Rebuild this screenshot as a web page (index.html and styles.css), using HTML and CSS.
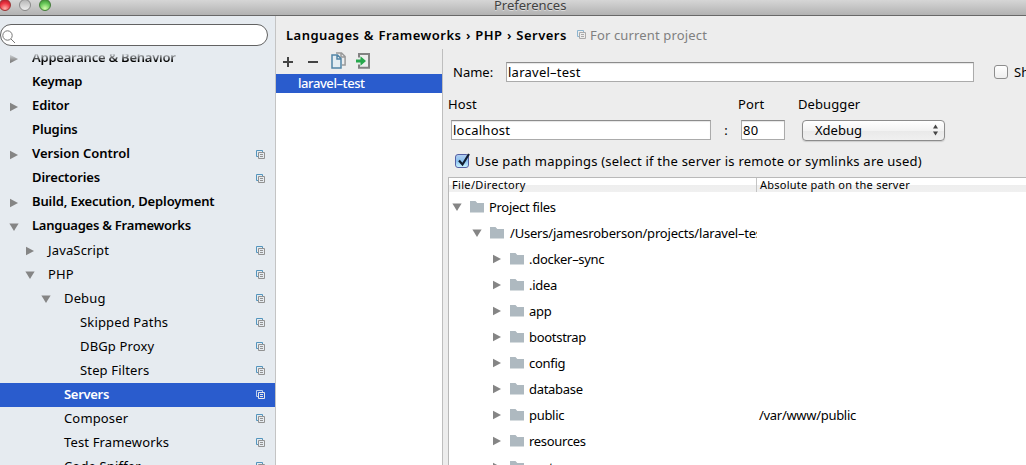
FILE: index.html
```html
<!DOCTYPE html>
<html lang="en">
<head>
<meta charset="utf-8">
<title>Preferences</title>
<link rel="stylesheet" href="styles.css">
</head>
<body>
<svg class="defs" width="0" height="0">
  <symbol id="copy" viewBox="0 0 10 10"><path class="back" d="M2 6.500H.5V.5h6V2"/><path class="front" d="M2.500 2.500h6v6h-6zM4 4.500h3M4 6.500h3"/></symbol>
  <symbol id="right" viewBox="0 0 10 10"><path d="M1 .8v8.400L9 5z"/></symbol>
  <symbol id="down" viewBox="0 0 10 10"><path d="M.4 1.500h9.200L5 9z"/></symbol>
  <symbol id="folder" viewBox="0 0 14 12"><path d="M0 0h5.500l1.800 2H14v9.500H0z"/></symbol>
</svg>
<div class="window">
  <header class="titlebar">
    <div class="lights"><i class="light red"></i><i class="light gray"></i><i class="light green"></i></div>
    <span class="title">Preferences</span>
  </header>
  <div class="content">
    <aside class="sidebar">
      <div class="search"><svg width="14" height="14" viewBox="0 0 14 14"><circle cx="5.500" cy="5.500" r="4.700"/><path d="M9 9l4 4"/></svg></div>
      <nav class="tree">
        <div class="item bold tight"><svg class="tri"><use href="#right"/></svg><span>Appearance &amp; Behavior</span></div>
        <div class="item bold"><i class="tri"></i><span>Keymap</span></div>
        <div class="item bold"><svg class="tri"><use href="#right"/></svg><span>Editor</span></div>
        <div class="item bold"><i class="tri"></i><span>Plugins</span></div>
        <div class="item bold loose"><svg class="tri"><use href="#right"/></svg><span>Version Control</span><svg class="copy"><use href="#copy"/></svg></div>
        <div class="item bold"><i class="tri"></i><span>Directories</span><svg class="copy"><use href="#copy"/></svg></div>
        <div class="item bold"><svg class="tri"><use href="#right"/></svg><span>Build, Execution, Deployment</span></div>
        <div class="item bold tight"><svg class="tri"><use href="#down"/></svg><span>Languages &amp; Frameworks</span></div>
        <div class="item l1"><svg class="tri"><use href="#right"/></svg><span>JavaScript</span><svg class="copy"><use href="#copy"/></svg></div>
        <div class="item l1"><svg class="tri"><use href="#down"/></svg><span>PHP</span><svg class="copy"><use href="#copy"/></svg></div>
        <div class="item l2"><svg class="tri"><use href="#down"/></svg><span>Debug</span><svg class="copy"><use href="#copy"/></svg></div>
        <div class="item l3"><i class="tri"></i><span>Skipped Paths</span><svg class="copy"><use href="#copy"/></svg></div>
        <div class="item l3"><i class="tri"></i><span>DBGp Proxy</span><svg class="copy"><use href="#copy"/></svg></div>
        <div class="item l3"><i class="tri"></i><span>Step Filters</span><svg class="copy"><use href="#copy"/></svg></div>
        <div class="item l2 selected"><i class="tri"></i><span>Servers</span><svg class="copy"><use href="#copy"/></svg></div>
        <div class="item l2"><i class="tri"></i><span>Composer</span><svg class="copy"><use href="#copy"/></svg></div>
        <div class="item l2"><i class="tri"></i><span>Test Frameworks</span><svg class="copy"><use href="#copy"/></svg></div>
        <div class="item l2"><i class="tri"></i><span>Code Sniffer</span><svg class="copy"><use href="#copy"/></svg></div>
      </nav>
    </aside>
    <main class="main">
      <div class="crumbs"><b>Languages &amp; Frameworks › PHP › Servers</b><svg class="copy"><use href="#copy"/></svg><span>For current project</span></div>
      <div class="body">
        <section class="servers">
          <div class="toolbar">
            <svg width="12" height="12" viewBox="0 0 12 12"><path class="ink" d="M6 1v10M1 6h10"/></svg>
            <svg width="12" height="12" viewBox="0 0 12 12"><path class="ink" d="M1 6h10"/></svg>
            <svg width="15" height="17" viewBox="0 0 15 17"><path class="sheet-back" d="M5 .9h5.500l3.600 3.600V13H11M10 1v4h4"/><path class="sheet" d="M1 3h5.500l3.500 3.500V16H1zM6 3v4h4"/></svg>
            <svg width="14" height="16" viewBox="0 0 14 16"><path class="door" d="M3 4.500V1h10v13.800H3v-3.300"/><path class="arrow" d="M0 6.500h4.500V3.300L10 8l-5.500 4.700V9.500H0z"/></svg>
          </div>
          <div class="server">laravel–test</div>
        </section>
        <section class="form">
          <div class="row name-row"><label>Name:</label><div class="field name">laravel–test</div><i class="check"></i><label class="shared">Shared</label></div>
          <div class="labels"><label>Host</label><label>Port</label><label>Debugger</label></div>
          <div class="row host-row"><div class="field host">localhost</div><span class="colon">:</span><div class="field port">80</div>
            <div class="select"><span>Xdebug</span><svg width="7" height="12" viewBox="0 0 7 12"><path d="M3.500 0.500L6 4.500H1zM3.500 11.500L6 7.500H1z"/></svg></div></div>
          <div class="row map-row"><i class="check on"><svg width="16" height="16" viewBox="0 0 16 16"><path d="M4 7.500l3.500 4L14 1"/></svg></i><label>Use path mappings (select if the server is remote or symlinks are used)</label></div>
          <div class="table">
            <div class="thead"><span>File/Directory</span><span>Absolute path on the server</span></div>
            <div class="tr"><div class="cell"><svg class="tri"><use href="#down"/></svg><svg class="folder"><use href="#folder"/></svg><span>Project files</span></div></div>
            <div class="tr d1"><div class="cell"><svg class="tri"><use href="#down"/></svg><svg class="folder"><use href="#folder"/></svg><span>/Users/jamesroberson/projects/laravel–test</span></div></div>
            <div class="tr d2"><div class="cell"><svg class="tri"><use href="#right"/></svg><svg class="folder"><use href="#folder"/></svg><span>.docker–sync</span></div></div>
            <div class="tr d2"><div class="cell"><svg class="tri"><use href="#right"/></svg><svg class="folder"><use href="#folder"/></svg><span>.idea</span></div></div>
            <div class="tr d2"><div class="cell"><svg class="tri"><use href="#right"/></svg><svg class="folder"><use href="#folder"/></svg><span>app</span></div></div>
            <div class="tr d2"><div class="cell"><svg class="tri"><use href="#right"/></svg><svg class="folder"><use href="#folder"/></svg><span>bootstrap</span></div></div>
            <div class="tr d2"><div class="cell"><svg class="tri"><use href="#right"/></svg><svg class="folder"><use href="#folder"/></svg><span>config</span></div></div>
            <div class="tr d2"><div class="cell"><svg class="tri"><use href="#right"/></svg><svg class="folder"><use href="#folder"/></svg><span>database</span></div></div>
            <div class="tr d2"><div class="cell"><svg class="tri"><use href="#right"/></svg><svg class="folder"><use href="#folder"/></svg><span>public</span></div><span class="path">/var/www/public</span></div>
            <div class="tr d2"><div class="cell"><svg class="tri"><use href="#right"/></svg><svg class="folder"><use href="#folder"/></svg><span>resources</span></div></div>
            <div class="tr d2"><div class="cell"><svg class="tri"><use href="#right"/></svg><svg class="folder"><use href="#folder"/></svg><span>routes</span></div></div>
          </div>
        </section>
      </div>
    </main>
  </div>
</div>
</body>
</html>
```
FILE: styles.css
```css
* { box-sizing: border-box; }
body { margin: 0; font: 13px/16px "Noto Sans", "Open Sans", sans-serif; color: #000; overflow: hidden; }
svg { display: block; flex: none; }
.defs { display: none; }
.window { width: 1026px; height: 465px; overflow: hidden; background: #ededed; display: flex; flex-direction: column; }

.titlebar { height: 16px; flex: none; display: flex; align-items: flex-start; background: linear-gradient(#d6d6d6, #b2b2b2); border-bottom: 1px solid #686868; }
.lights { display: flex; gap: 8px; width: 494px; }
.light { width: 12px; height: 12px; margin-top: -1px; border-radius: 50%; border: 1px solid #777; flex: none; }
.red { background: radial-gradient(circle at 50% 85%, #ffb0a8, #ec3340 55%, #a51924); border-color: #9c3434; margin-left: -1px; }
.gray { background: linear-gradient(#b5b5b5, #eee); border-color: #888; }
.green { background: radial-gradient(circle at 50% 85%, #d5ffac, #65c657 55%, #357e2c); border-color: #437b38; }
.title { color: #414141; line-height: 10px; text-shadow: 0 1px 0 #ddd; }

.content { display: flex; flex: 1; min-height: 0; }
.sidebar { width: 276px; flex: none; background: #e6ebf0; border-right: 1px solid #c4c4c4; padding-top: 8px; overflow: hidden; }
.search { width: 268px; height: 22px; border: 1px solid #626262; border-radius: 11px; background: #fff; padding: 5px 1px; }
.search svg { fill: none; stroke: #777; stroke-width: 1; }
.tree { height: 411px; margin-top: 8px; overflow: hidden; }
.tree .item:first-child { margin-top: -7px; -webkit-mask-image: linear-gradient(transparent 6px, #000 14px); mask-image: linear-gradient(transparent 6px, #000 14px); }
.item { height: 24px; display: flex; align-items: center; padding: 0 9px 0 9px; letter-spacing: .15px; }
.item span { margin-left: 13px; flex: 1; white-space: nowrap; padding-bottom: 2px; }
.tri { width: 10px; height: 10px; flex: none; fill: #858585; }
.bold { font-weight: 600; letter-spacing: -.12px; }
.bold span { padding-bottom: 4px; }
.tight { letter-spacing: -.23px; }
.loose { letter-spacing: 0; }
.l1 { padding-left: 25px; }
.l2 { padding-left: 41px; }
.l3 { padding-left: 57px; }
.copy { width: 10px; height: 10px; fill: none; stroke-width: 1; --back: #5495bd; --front: #929292; }
.back { stroke: var(--back); }
.front { stroke: var(--front); }
.selected { background: #2a5ccd; color: #fff; font-weight: 600; letter-spacing: -.3px; }
.selected .copy { --back: #b9cdf0; --front: #e8e8e8; }

.main { flex: 1; min-width: 0; display: flex; flex-direction: column; }
.crumbs { height: 33px; flex: none; display: flex; align-items: center; padding: 5px 0 0 10px; white-space: nowrap; }
.crumbs b { font-weight: 600; width: 291px; letter-spacing: .47px; word-spacing: .6px; }
.crumbs .copy { --back: #8cb5d0; --front: #aaa; }
.crumbs span { margin-left: 3px; color: #808080; letter-spacing: .15px; }
.body { display: flex; flex: 1; min-height: 0; }
.servers { width: 167px; flex: none; background: #fff; border-right: 1px solid #bebebe; }
.toolbar { height: 25px; background: #ededed; display: flex; align-items: center; padding: 0 6px; gap: 13px; }
.toolbar svg { fill: none; }
.toolbar svg:nth-child(2) { margin-right: -1px; }
.toolbar svg:nth-child(3) { margin: -2px -3px 0 0; }
.toolbar svg:nth-child(4) { margin-top: -2px; }
.ink { stroke: #444; stroke-width: 2; }
.sheet { fill: #e4edf2; stroke: #5285a6; stroke-width: 1.500; }
.sheet-back { stroke: #999; stroke-width: 1.500; }
.door { stroke: #828282; stroke-width: 2; }
.arrow { fill: #27a84c; }
.server { height: 19px; line-height: 18px; padding-left: 22px; background: #2a5ccd; color: #fff; font-weight: 500; letter-spacing: -.42px; }

.form { flex: 1; min-width: 0; overflow: hidden; white-space: nowrap; padding-top: 13px; }
.row { display: flex; align-items: center; }
.row > * { flex: none; }
.field { background: #fff; border: 1px solid #ababab; border-top-color: #8c8c8c; height: 20px; line-height: 18px; padding-left: 1px; box-shadow: inset 0 1px 1px #e5e5e5; letter-spacing: .25px; }
.name-row { height: 20px; padding-left: 10px; }
.name-row label:first-child { width: 53px; }
.name { width: 468px; }
.check { width: 14px; height: 14px; border: 1px solid #8d8d8d; border-radius: 3px; background: linear-gradient(#fff, #eee); flex: none; margin-left: 20px; }
.shared { margin-left: 6px; }
.labels { display: grid; grid-template-columns: 290px 60px 1fr; padding: 14px 0 0 5px; height: 38px; letter-spacing: .1px; }
.host-row { height: 20px; padding-left: 8px; }
.host { width: 260px; }
.colon { width: 30px; text-align: center; }
.port { width: 44px; }
.select { width: 143px; height: 21px; margin-left: 17px; border: 1px solid #8c8c8c; border-radius: 4px; background: linear-gradient(#fff, #f3f3f3 50%, #e9e9e9 51%, #f0f0f0); display: flex; align-items: center; justify-content: space-between; padding: 0 5px 0 12px; box-shadow: 0 1px 1px #ccc; }
.select span { padding-bottom: 1px; }
.select svg { fill: #444; }
.map-row { height: 22px; margin-top: 10px; padding-left: 12px; letter-spacing: .22px; }
.on { margin-left: 0; background: linear-gradient(#b0cdf0, #8ac1ef 50%, #c8f2ff); border-color: #5460a4; }
.on svg { margin: -2px 0 0 -1px; fill: none; stroke: #101c30; stroke-width: 2.200; }
.on + label { margin-left: 6px; }
.table { margin: 5px 0 0 5px; border: solid #b9b9b9; border-width: 1px 0 0 1px; height: 300px; background: #fff; }
.thead { height: 14px; margin-bottom: 2px; font-size: 11px; line-height: 14px; letter-spacing: .24px; display: flex; background: linear-gradient(#fff 50%, #eee 51%, #f0f0f0); }
.thead span:first-child { width: 308px; padding-left: 3px; border-right: 1px solid #c4c4c4; letter-spacing: .33px; }
.thead span:last-child { padding-left: 3px; }
.tr { height: 26px; display: flex; align-items: center; letter-spacing: -.3px; }
.cell { width: 308px; overflow: hidden; display: flex; align-items: center; padding-left: 3px; white-space: nowrap; }
.d1 .cell { padding-left: 23px; }
.d1 span { margin-left: 1px; letter-spacing: -.2px; }
.d2 .cell { padding-left: 43px; }
.folder { width: 14px; height: 12px; margin: 0 5px 0 8px; fill: #aeb9c0; }
.path { padding-left: 2px; }
```
